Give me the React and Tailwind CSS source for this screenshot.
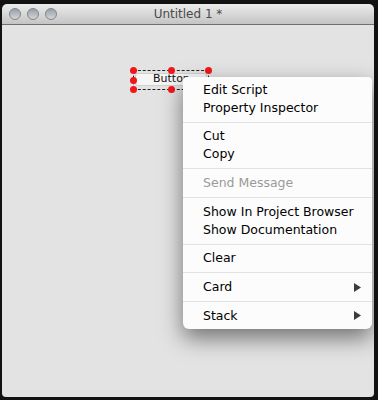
import React from "react";

const font = { fontFamily: '"DejaVu Sans", "Liberation Sans", sans-serif' };

function Item({ label, disabled, arrow }) {
    return (
        <div className={`flex h-[18px] items-center justify-between pl-[20px] pr-[11px] ${disabled ? "text-[#9a9a9a]" : "text-black"}`}>
            <span>{label}</span>
            {arrow && (
                <svg width="7" height="9" viewBox="0 0 7 9">
                    <polygon points="0,0 7,4.5 0,9" fill="#3c3c3c" />
                </svg>
            )}
        </div>
    );
}

function Sep() {
    return (
        <div className="flex h-[10.667px] items-center">
            <div className="h-px w-full bg-[#e2e2e2]" />
        </div>
    );
}

function Handle() {
    return <span className="h-[7px] w-[7px] rounded-full bg-[#f2161b]" />;
}

function Light() {
    return <span className="h-[12px] w-[12px] rounded-full border border-[#80858c] bg-gradient-to-b from-[#9aa0a8] to-[#d3d6da]" />;
}

export default function App() {
    return (
        <div className="h-[400px] w-[378px] bg-[#121212] pb-[3px] pl-[2px] pr-[4px] pt-[4px]" style={font}>
            <div className="flex h-full flex-col overflow-hidden rounded-b-[4px] rounded-t-[5px]">
                {/* title bar */}
                <div className="flex h-[21px] shrink-0 items-center border-b border-[#6f6f6f] bg-gradient-to-b from-[#ececec] to-[#c4c4c4] pl-[7px] pr-[64px]">
                    <div className="flex w-[57px] gap-[6px]">
                        <Light />
                        <Light />
                        <Light />
                    </div>
                    <div className="flex-1 text-center text-[12px] text-[#4a4a4a]">Untitled 1 *</div>
                </div>

                {/* card */}
                <div className="relative flex-1 bg-[#e3e3e3]">
                    {/* selected button */}
                    <div className="absolute left-[131px] top-[45px] h-[20px] w-[76px] border border-dashed border-[#222] px-[1px] pt-[2px]">
                        <div className="flex h-[13px] items-center rounded-[3px] border border-[#d0d0d0] bg-[#f6f6f6] pl-[17px] text-[11px] text-[#111]">
                            Button
                        </div>
                        <div className="absolute -inset-[4px] flex flex-col justify-between">
                            <div className="flex justify-between">
                                <Handle />
                                <Handle />
                                <Handle />
                            </div>
                            <div className="flex justify-between">
                                <Handle />
                                <Handle />
                            </div>
                            <div className="flex justify-between">
                                <Handle />
                                <Handle />
                                <Handle />
                            </div>
                        </div>
                    </div>

                    {/* context menu */}
                    <div className="absolute left-[181px] top-[52px] w-[189px] rounded-b-[6px] rounded-t-[4px] bg-[#fcfcfc] py-[4px] text-[12.5px] shadow-[0_9px_22px_rgba(0,0,0,0.5)]">
                        <Item label="Edit Script" />
                        <Item label="Property Inspector" />
                        <Sep />
                        <Item label="Cut" />
                        <Item label="Copy" />
                        <Sep />
                        <Item label="Send Message" disabled />
                        <Sep />
                        <Item label="Show In Project Browser" />
                        <Item label="Show Documentation" />
                        <Sep />
                        <Item label="Clear" />
                        <Sep />
                        <Item label="Card" arrow />
                        <Sep />
                        <Item label="Stack" arrow />
                    </div>
                </div>
            </div>
        </div>
    );
}
